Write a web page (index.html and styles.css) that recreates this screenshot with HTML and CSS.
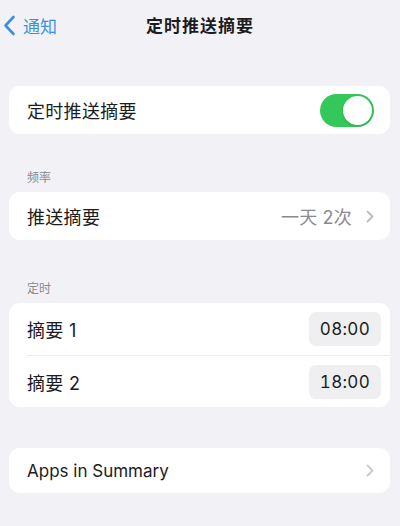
FILE: index.html
```html
<!DOCTYPE html>
<html lang="zh-CN">
<head>
  <meta charset="UTF-8">
  <meta name="viewport" content="width=device-width, initial-scale=1.0">
  <title>定时推送摘要</title>
  <link rel="stylesheet" href="styles.css">
</head>
<body>

  <!-- Navigation bar -->
  <header class="nav-bar">
    <a class="back-link" href="#">
      <svg class="back-icon" width="13" height="21" viewBox="0 0 13 21">
        <path d="M10.5 2 L2.5 10.5 L10.5 19" fill="none" stroke="currentColor" stroke-width="2.6" stroke-linecap="round" stroke-linejoin="round"/>
      </svg>
      <span>通知</span>
    </a>
    <h1 class="nav-title">定时推送摘要</h1>
  </header>

  <main class="settings">
    <!-- Main switch -->
    <section class="group first">
      <div class="row">
        <span class="row-label">定时推送摘要</span>
        <span class="switch on"><span class="knob"></span></span>
      </div>
    </section>

    <!-- Frequency -->
    <section class="group freq">
      <h2 class="group-title">频率</h2>
      <div class="card">
        <div class="row">
          <span class="row-label">推送摘要</span>
          <span class="row-value">一天 2次
            <svg class="chevron" width="8" height="13" viewBox="0 0 8 13">
              <path d="M1.5 1.5 L6.5 6.5 L1.5 11.5" fill="none" stroke="currentColor" stroke-width="1.8" stroke-linecap="round" stroke-linejoin="round"/>
            </svg>
          </span>
        </div>
      </div>
    </section>

    <!-- Schedule -->
    <section class="group schedule">
      <h2 class="group-title">定时</h2>
      <div class="card">
        <div class="row time-row">
          <span class="row-label">摘要 1</span>
          <span class="time-pill">08:00</span>
        </div>
        <div class="row time-row">
          <span class="row-label">摘要 2</span>
          <span class="time-pill">18:00</span>
        </div>
      </div>
    </section>

    <!-- Apps -->
    <section class="group apps">
      <div class="card">
        <div class="row">
          <span class="row-label latin">Apps in Summary</span>
          <svg class="chevron light" width="8" height="13" viewBox="0 0 8 13">
            <path d="M1.5 1.5 L6.5 6.5 L1.5 11.5" fill="none" stroke="currentColor" stroke-width="1.8" stroke-linecap="round" stroke-linejoin="round"/>
          </svg>
        </div>
      </div>
    </section>
  </main>

</body>
</html>
```

FILE: styles.css
```css
/* Reset and base styling */
* {
  margin: 0;
  padding: 0;
  box-sizing: border-box;
}

body {
  font-family: 'Inter', 'Noto Sans CJK SC', sans-serif;
  background-color: #f2f2f6;
  color: #1c1c1e;
  width: 400px;
  height: 526px;
  overflow: hidden;
}

/* Navigation bar */
.nav-bar {
  display: flex;
  align-items: center;
  justify-content: center;
  height: 52px;
  padding-bottom: 4px;
  position: relative;
}

.back-link {
  position: absolute;
  left: 3px;
  top: 13px;
  display: flex;
  align-items: center;
  gap: 7px;
  color: #3b8fe0;
  text-decoration: none;
  font-size: 17px;
}

.nav-title {
  font-size: 17px;
  font-weight: 700;
  color: #1c1c1e;
  letter-spacing: 1px;
}

/* Settings groups */
.settings {
  padding: 0 10px 0 9px;
}

.group {
  margin-top: 34px;
}

.group.first {
  background-color: #fff;
  border-radius: 11px;
}

.group.freq {
  margin-top: 36px;
}

.group.schedule {
  margin-top: 41px;
}

.group.apps {
  margin-top: 41px;
}

.group-title {
  font-size: 12px;
  font-weight: 400;
  color: #8a8a8e;
  padding: 0 0 7px 18px;
  margin-top: -2px;
}

.card {
  background-color: #fff;
  border-radius: 11px;
  overflow: hidden;
}

.row {
  display: flex;
  align-items: center;
  justify-content: space-between;
  height: 48px;
  padding: 0 16px 0 18px;
  font-size: 18px;
}

.row-label {
  letter-spacing: 0.3px;
}

.row-label.latin {
  font-size: 17px;
  letter-spacing: 0;
}

.apps .row {
  height: 45px;
}

.row-value {
  display: flex;
  align-items: center;
  gap: 14px;
  color: #8a8a8e;
  letter-spacing: 0.2px;
}

.chevron {
  color: #bcbcc0;
}

.chevron.light {
  color: #c9c9cd;
}

/* Toggle switch */
.switch {
  width: 54px;
  height: 33px;
  border-radius: 17px;
  background-color: #34c759;
  padding: 2px;
  display: flex;
  justify-content: flex-end;
}

.knob {
  width: 29px;
  height: 29px;
  border-radius: 50%;
  background-color: #fff;
  box-shadow: 0 1px 3px rgba(0, 0, 0, 0.15);
}

/* Time rows */
.time-row {
  height: 52px;
  padding-right: 9px;
}

.time-row + .time-row {
  border-top: 1px solid #ececee;
  margin-left: 18px;
  padding-left: 0;
}

.time-pill {
  background-color: #efeff1;
  border-radius: 7px;
  padding: 7px 11px;
  font-size: 17px;
  letter-spacing: 0.3px;
  font-variant-numeric: tabular-nums;
}
```
